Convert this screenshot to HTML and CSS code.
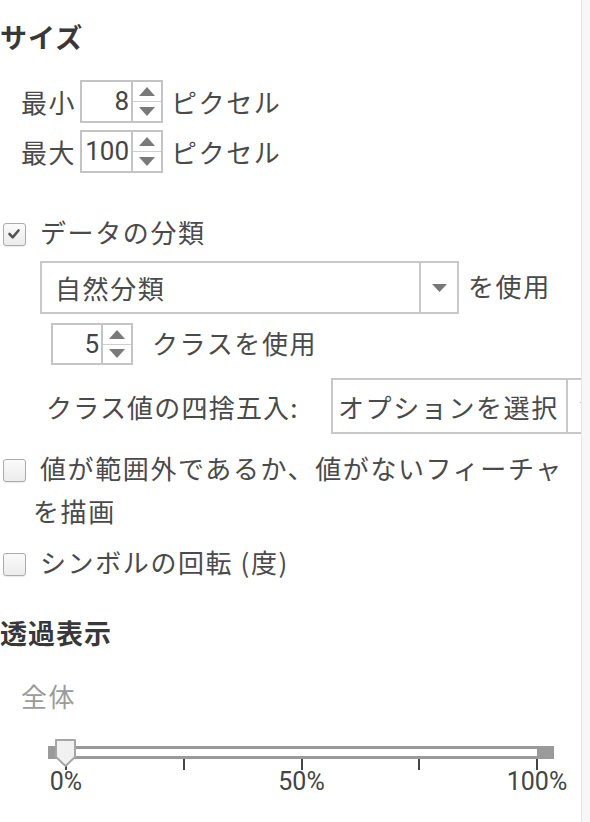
FILE: index.html
```html
<!DOCTYPE html>
<html lang="ja">
<head>
<meta charset="utf-8">
<title>シンボル設定</title>
<link rel="stylesheet" href="styles.css">
</head>
<body>
<div class="page">
  <div class="panel">
    <h2 class="heading h-size">サイズ</h2>
    <div class="size-rows">
      <div class="size-row">
        <span class="lbl">最小</span>
        <div class="spin">
          <span class="spin-val">8</span>
          <div class="spin-btns">
            <span class="sb up"><svg width="16" height="9" viewBox="0 0 16 9"><path d="M8 0 L16 9 L0 9 Z"/></svg></span>
            <span class="sb down"><svg width="16" height="9" viewBox="0 0 16 9"><path d="M0 0 L16 0 L8 9 Z"/></svg></span>
          </div>
        </div>
        <span class="unit">ピクセル</span>
      </div>
      <div class="size-row">
        <span class="lbl">最大</span>
        <div class="spin">
          <span class="spin-val">100</span>
          <div class="spin-btns">
            <span class="sb up"><svg width="16" height="9" viewBox="0 0 16 9"><path d="M8 0 L16 9 L0 9 Z"/></svg></span>
            <span class="sb down"><svg width="16" height="9" viewBox="0 0 16 9"><path d="M0 0 L16 0 L8 9 Z"/></svg></span>
          </div>
        </div>
        <span class="unit">ピクセル</span>
      </div>
    </div>

    <p class="check-para cp-class"><span class="cb"><svg width="20" height="20" viewBox="0 0 20 20"><path d="M5.5 10 L8.7 13.3 L14.5 6.5" fill="none" stroke="#555" stroke-width="2.6" stroke-linecap="round" stroke-linejoin="round"/></svg></span>データの分類</p>

    <div class="sel-row">
      <div class="select sel-method">
        <span class="sel-text">自然分類</span>
        <span class="sel-arrow"><svg width="15" height="8" viewBox="0 0 15 8"><path d="M0 0 L15 0 L7.5 8 Z"/></svg></span>
      </div>
      <span class="after">を使用</span>
    </div>

    <div class="classes-row">
      <div class="spin spin-sm">
        <span class="spin-val">5</span>
        <div class="spin-btns">
          <span class="sb up"><svg width="16" height="9" viewBox="0 0 16 9"><path d="M8 0 L16 9 L0 9 Z"/></svg></span>
          <span class="sb down"><svg width="16" height="9" viewBox="0 0 16 9"><path d="M0 0 L16 0 L8 9 Z"/></svg></span>
        </div>
      </div>
      <span class="after-cls">クラスを使用</span>
    </div>

    <div class="round-row">
      <span class="round-lbl">クラス値の四捨五入:</span>
      <div class="select sel-round">
        <span class="sel-text">オプションを選択</span>
        <span class="sel-arrow"><svg width="15" height="8" viewBox="0 0 15 8"><path d="M0 0 L15 0 L7.5 8 Z"/></svg></span>
      </div>
    </div>

    <p class="check-para cp-out"><span class="cb"></span>値が範囲外であるか、値がないフィーチャを描画</p>
    <p class="check-para cp-rot"><span class="cb"></span>シンボルの回転 (度)</p>

    <h2 class="heading h-trans">透過表示</h2>
    <div class="sub">全体</div>

    <div class="slider">
      <div class="track"><div class="track-in"></div></div>
      <div class="thumb"><svg width="21" height="28" viewBox="0 0 21 28"><path d="M1 1 H20 V18 L10.5 27 L1 18 Z" fill="#f1f1f1" stroke="#a6a6a6" stroke-width="2" stroke-linejoin="round"/></svg></div>
      <div class="ticks"><i></i><i></i><i></i><i></i><i></i></div>
      <div class="labels"><span class="tl"><b>0%</b></span><span class="tl"><b>50%</b></span><span class="tl"><b>100%</b></span></div>
    </div>
  </div>
  <div class="scroll"></div>
</div>
</body>
</html>
```

FILE: styles.css
```css
html, body {
  margin: 0;
  padding: 0;
  background: #fff;
}

body {
  font-family: "Noto Sans CJK JP", "Noto Sans", sans-serif;
  font-size: 26px;
  letter-spacing: 1.6px;
  color: #4a4a4a;
}

.page {
  display: flex;
  width: 590px;
  height: 822px;
}

.panel {
  width: 581px;
  height: 822px;
  overflow: hidden;
  flex-shrink: 0;
  border-right: 1px solid #e6e6e6;
}

.scroll {
  flex: 1;
  background: #f7f7f7;
}

.heading {
  margin: 0;
  font-size: 27px;
  font-weight: bold;
  line-height: 40px;
  color: #383838;
  letter-spacing: 1px;
}

.h-size { margin-top: 17px; }
.h-trans { margin-top: 30px; }

/* size rows */
.size-rows { margin-top: 23px; }

.size-row {
  display: flex;
  align-items: center;
  height: 43px;
}
.size-row + .size-row { margin-top: 7px; }

.lbl {
  margin-left: 21px;
  width: 59px;
  flex-shrink: 0;
}

.unit { margin-left: 8px; }

/* spin box */
.spin {
  display: flex;
  box-sizing: border-box;
  width: 83px;
  height: 43px;
  border: 2px solid #c4c4c4;
  flex-shrink: 0;
}
.spin-sm {
  width: 82px;
  height: 42px;
}

.spin-val {
  flex: 1;
  text-align: right;
  padding-right: 2px;
  font-family: Roboto, "Liberation Sans", sans-serif;
  font-size: 26px;
  letter-spacing: 0;
  line-height: 39px;
  color: #444;
}
.spin-sm .spin-val { line-height: 38px; }

.spin-btns {
  width: 28px;
  border-left: 2px solid #c4c4c4;
  display: flex;
  flex-direction: column;
}

.sb {
  flex: 1;
  display: flex;
  justify-content: center;
  align-items: center;
}
.sb svg { fill: #7a7a7a; }
.sb.up { border-bottom: 1px solid #cfcfcf; }

/* checkbox paragraphs */
.check-para {
  margin: 0;
  line-height: 43px;
  padding-left: 33px;
  text-indent: -30px;
}
.cp-class { margin-top: 39px; line-height: 40px; }
.cp-out { margin-top: 12px; }
.cp-rot { margin-top: 8px; }

.cb {
  display: inline-block;
  box-sizing: border-box;
  width: 23px;
  height: 23px;
  margin-right: 14px;
  text-indent: 0;
  vertical-align: -3px;
  border: 1.5px solid #ababab;
  border-radius: 3px;
  background: linear-gradient(#fafafa, #ececec);
  box-shadow: 0 1px 1px rgba(0, 0, 0, 0.08);
}
.cb svg { display: block; margin: 0; }

/* selects */
.select {
  display: flex;
  box-sizing: border-box;
  border: 2px solid #c8c8c8;
  flex-shrink: 0;
}
.sel-text {
  flex: 1;
  display: flex;
  align-items: center;
  white-space: nowrap;
}
.sel-arrow {
  display: flex;
  align-items: center;
  justify-content: center;
  border-left: 2px solid #c8c8c8;
}
.sel-arrow svg { fill: #777; }

.sel-row {
  display: flex;
  align-items: center;
  margin-top: 9px;
  margin-left: 40px;
}
.sel-method {
  width: 419px;
  height: 53px;
}
.sel-method .sel-text { padding-left: 13px; }
.sel-method .sel-arrow { width: 36px; }

.after { margin-left: 9px; margin-top: -4px; }

.classes-row {
  display: flex;
  align-items: center;
  margin-top: 9px;
  margin-left: 51px;
}
.after-cls { margin-left: 19px; margin-top: -3px; }

.round-row {
  display: flex;
  align-items: center;
  margin-top: 13px;
}
.round-lbl {
  margin-left: 46px;
  width: 285px;
  flex-shrink: 0;
  letter-spacing: 1.2px;
}
.sel-round {
  width: 277px;
  height: 56px;
}
.sel-round .sel-text { padding-left: 5px; }
.sel-round .sel-arrow { width: 38px; flex-shrink: 0; }

/* transparency */
.sub {
  margin-top: 23px;
  margin-left: 21px;
  line-height: 40px;
  color: #9b9b9b;
}

.slider {
  position: relative;
  margin-top: 30px;
  margin-left: 48px;
  width: 506px;
}

.track {
  box-sizing: border-box;
  height: 13px;
  padding: 3px 17px 3px 9px;
  background: #9a9a9a;
}
.track-in {
  height: 7px;
  background: #fff;
}

.thumb {
  position: absolute;
  left: 7px;
  top: -7px;
  width: 21px;
  height: 28px;
  z-index: 2;
}
.thumb svg { display: block; }

.ticks {
  display: flex;
  justify-content: space-between;
  margin-left: 17px;
  width: 473px;
  height: 11px;
}
.ticks i {
  display: block;
  width: 2px;
  height: 11px;
  background: #444;
}

.labels {
  display: flex;
  justify-content: space-between;
  margin-left: 18px;
  width: 471px;
  line-height: 24px;
}
.tl {
  width: 0;
  display: flex;
  justify-content: center;
}
.tl b {
  font-weight: normal;
  white-space: nowrap;
  font-family: Roboto, "Liberation Sans", sans-serif;
  font-size: 25px;
  letter-spacing: 0;
  color: #444;
}
```
